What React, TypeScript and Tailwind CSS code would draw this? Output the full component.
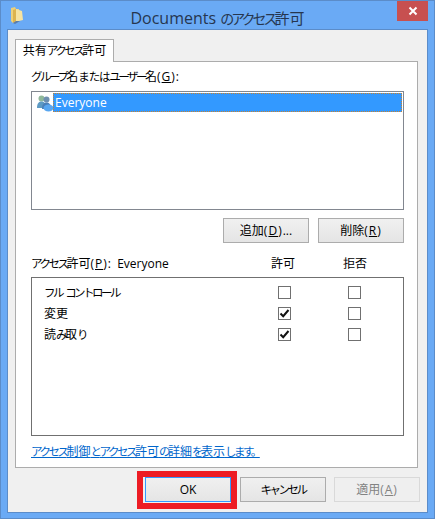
import React from "react";

const font = "[font-family:'Open_Sans','Noto_Sans_CJK_JP',sans-serif]";

function K({ children }: { children: React.ReactNode }) {
  return <span className="text-[11.5px] tracking-[-2.5px]">{children}</span>;
}

function H({ children }: { children: React.ReactNode }) {
  return <span className="text-[11.5px] tracking-[-1.2px]">{children}</span>;
}

function Mn({ c }: { c: string }) {
  return (
    <span className="tracking-[1px]">
      (<span className="underline">{c}</span>)
    </span>
  );
}

function Check({ on }: { on?: boolean }) {
  return (
    <div className="flex h-[13px] w-[13px] items-center justify-center border border-[#707070] bg-white">
      {on && (
        <svg width="11" height="11" viewBox="0 0 11 11">
          <path d="M1.5 5.5 L4.2 8.2 L9.5 2" fill="none" stroke="#111" strokeWidth="2" />
        </svg>
      )}
    </div>
  );
}

function Row({ label, allow }: { label: React.ReactNode; allow?: boolean }) {
  return (
    <div className="flex h-[21px] items-center pl-[12px]">
      <div className="w-[234px] text-[12px] leading-[16px] text-black">{label}</div>
      <Check on={allow} />
      <div className="w-[57px]" />
      <Check />
    </div>
  );
}

function Btn({ children, className = "" }: { children: React.ReactNode; className?: string }) {
  return (
    <div
      className={`flex w-[86px] items-center justify-center whitespace-pre border bg-gradient-to-b from-[#f0f0f0] to-[#e5e5e5] text-[12px] ${className}`}
    >
      {children}
    </div>
  );
}

export default function App() {
  return (
    <div className={`flex h-[519px] w-[435px] flex-col border border-[#5b8cc9] bg-[#6aaaf5] ${font}`}>
      <div className="flex h-[28px] shrink-0 items-start pr-[6px]">
        <svg width="14" height="17" viewBox="0 0 14 17" className="ml-[10px] mt-[6px] shrink-0">
          <path d="M0 1 L4 0 L5 2 L8 2 L8 13 L2 16 L0 14 Z" fill="#ecd07a" />
          <path d="M5 2 L8 3 L11 4 L12 13 L8 14 L5 15 Z" fill="#f6e3a1" />
          <path d="M2 3 L5 2 L5 14 L2 16 Z" fill="#dcb44f" />
          <path d="M2 16 L5 14 L9 14 L4 17 Z" fill="#5c7da8" />
        </svg>
        <div className="flex-1 pt-[7px] pl-[13px] text-center text-[15px] leading-[20px] text-[#26364f] whitespace-pre">
          <span className="text-[16px]">Documents </span>
          <span className="text-[14px] tracking-[-3px]">のアクセス</span>許可
        </div>
        <div className="flex h-[20px] w-[31px] shrink-0 items-center justify-center bg-[#c75050]">
          <svg width="10" height="10" viewBox="0 0 10 10">
            <path d="M1.5 1.5 L8.5 8.5 M8.5 1.5 L1.5 8.5" stroke="#fff" strokeWidth="2" />
          </svg>
        </div>
      </div>

      <div className="ml-[6px] mr-[6px] h-[484px] shrink-0 border border-[#5b8cc9] bg-[#f0f0f0] px-[7px] pt-[9px]">
        <div className="relative z-10 -mb-px flex h-[23px] w-[99px] items-center justify-center border border-b-0 border-[#acacac] bg-white text-[12px] text-black">
          <span>
            共有<K>アクセス</K>許可
          </span>
        </div>

        <div className="flex h-[407px] w-[403px] flex-col border border-[#acacac] bg-white pl-[15px] pt-[7px]">
          <div className="h-[16px] text-[12px] leading-[16px] text-black">
            <K>グループ</K>名<H>または</H>
            <K>ユーザー</K>名<Mn c="G" />:
          </div>
          <div className="mt-[6px] h-[119px] w-[373px] border border-[#828790] pt-px">
            <div className="flex items-center">
              <svg width="18" height="18" viewBox="0 0 18 18" className="ml-[4px] shrink-0">
                <circle cx="5.5" cy="4.5" r="3" fill="#8fb89a" />
                <path d="M1 14 C1 9 3 7.5 5.5 7.5 C8 7.5 10 9 10 14 Z" fill="#5d9ac4" />
                <circle cx="10.5" cy="5.5" r="3" fill="#6d8fb0" />
                <path d="M6 15 C6 10 8 8.5 10.5 8.5 C13 8.5 15 10 15 15 Z" fill="#4a7fb8" />
                <ellipse cx="12.5" cy="14" rx="5" ry="3.5" fill="#58a6f0" />
              </svg>
              <div className="ml-[-1px] flex h-[19px] w-[349px] items-center border border-dotted border-[#c9822f] bg-[#3399ff] pl-[1px] text-[12px] text-white">
                Everyone
              </div>
            </div>
          </div>

          <div className="mt-[8px] flex w-[373px] justify-end gap-[9px]">
            <Btn className="h-[25px] border-[#acacac] text-black">
              追加<Mn c="D" />...
            </Btn>
            <Btn className="h-[25px] border-[#acacac] text-black">
              削除<Mn c="R" />
            </Btn>
          </div>

          <div className="mt-[13px] flex h-[16px] items-center text-[12px] leading-[16px] text-black">
            <div className="w-[240px] whitespace-pre">
              <K>アクセス</K>許可<Mn c="P" />:  Everyone
            </div>
            <div className="w-[24px]">許可</div>
            <div className="ml-[48px] w-[24px]">拒否</div>
          </div>

          <div className="mt-[5px] h-[159px] w-[373px] border border-[#707070] pt-[4px]">
            <Row
              label={
                <>
                  <K>フル</K> <K>コントロール</K>
                </>
              }
            />
            <Row label="変更" allow />
            <Row
              label={
                <>
                  読<K>み</K>取<K>り</K>
                </>
              }
              allow
            />
          </div>

          <div className="mt-[8px] text-[12px] leading-[16px] text-[#0066cc] underline">
            <K>アクセス</K>制御<K>と</K>
            <K>アクセス</K>許可<K>の</K>詳細<K>を</K>表示<K>します。</K>
          </div>
        </div>

        <div className="mt-[9px] flex justify-end">
          <div className="relative h-[25px] w-[86px]">
            <Btn className="h-[25px] border-[#3399ff] text-black">OK</Btn>
            <div className="absolute -left-[8px] -top-[6px] h-[38px] w-[100px] border-[6px] border-[#ed1c24]" />
          </div>
          <Btn className="ml-[9px] h-[25px] border-[#acacac] text-black">
            <K>キャンセル</K>
          </Btn>
          <div className="ml-[8px]">
            <div className="flex h-[25px] w-[86px] items-center justify-center border border-[#d9d9d9] bg-[#efefef] text-[12px] text-[#838383]">
              適用
              <Mn c="A" />
            </div>
          </div>
        </div>
      </div>
    </div>
  );
}
